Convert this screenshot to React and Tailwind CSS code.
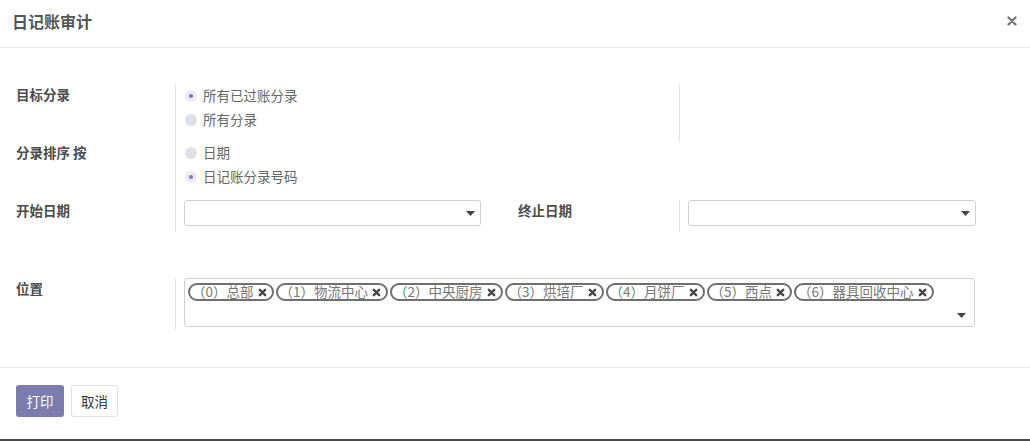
import React from "react";

const font = { fontFamily: '"Noto Sans CJK SC", "Liberation Sans", sans-serif' };

function Radio({ checked, label }) {
  return (
    <div className="flex items-center h-[24px]">
      <span
        className={
          "ml-[1px] w-[12px] h-[12px] rounded-full flex items-center justify-center " +
          (checked ? "bg-[#eceaf4]" : "bg-[#dfe1e6]")
        }
      >
        {checked && <span className="w-[4px] h-[4px] rounded-full bg-[#7c7bad]" />}
      </span>
      <span className="ml-[6px] text-[13.5px] text-[#666] -mt-[1px]">{label}</span>
    </div>
  );
}

function Caret() {
  return (
    <svg width="9" height="5" viewBox="0 0 9 5">
      <path d="M0 0 H9 L4.5 5 Z" fill="#444" />
    </svg>
  );
}

function Tag({ label }) {
  return (
    <span className="h-[18px] flex items-center border-2 border-[#6f6f6f] rounded-full pr-[5px] pl-[2px] text-[13.5px] text-[#777] leading-none">
      <span>{label}</span>
      <svg className="ml-[4px]" width="9" height="9" viewBox="0 0 10 10">
        <path d="M2 2 L8 8 M8 2 L2 8" stroke="#444" strokeWidth="2.6" strokeLinecap="round" />
      </svg>
    </span>
  );
}

export default function App() {
  const tags = [
    "（0）总部",
    "（1）物流中心",
    "（2）中央厨房",
    "（3）烘培厂",
    "（4）月饼厂",
    "（5）西点",
    "（6）器具回收中心",
  ];
  return (
    <div className="w-[1030px] h-[441px] bg-[#4a4a4a] overflow-hidden" style={font}>
      <div className="w-[1030px] h-[439px] bg-white flex flex-col">
        {/* Header */}
        <div className="h-[48px] border-b border-[#e9ecef] flex items-center justify-between pl-[12px] pr-[13px] shrink-0">
          <h4 className="text-[16px] font-bold text-[#555] -mt-[6px]">日记账审计</h4>
          <svg className="-mt-[6px]" width="10" height="10" viewBox="0 0 10 10">
            <path d="M1.5 1.5 L8.5 8.5 M8.5 1.5 L1.5 8.5" stroke="#777" strokeWidth="2.4" strokeLinecap="round" />
          </svg>
        </div>

        {/* Body */}
        <div className="flex-1 pl-[16px] pt-[36px]">
          {/* Row A */}
          <div className="flex h-[58px]">
            <div className="w-[159px] text-[13.5px] font-bold text-[#4c4c4c]">目标分录</div>
            <div className="w-[305px] border-l border-[#e4e4e4] pl-[8px]">
              <Radio checked label="所有已过账分录" />
              <Radio label="所有分录" />
            </div>
            <div className="w-[199px]" />
            <div className="w-[300px] border-l border-[#e4e4e4]" />
          </div>
          {/* Row B */}
          <div className="flex h-[48px]">
            <div className="w-[159px] text-[13.5px] font-bold text-[#4c4c4c]">分录排序 按</div>
            <div className="w-[305px] border-l border-[#e4e4e4] pl-[8px] -mt-[1px]">
              <Radio label="日期" />
              <Radio checked label="日记账分录号码" />
            </div>
          </div>
          {/* Row C */}
          <div className="flex h-[42px]">
            <div className="w-[159px] pt-[10px] text-[13.5px] font-bold text-[#4c4c4c]">开始日期</div>
            <div className="w-[305px] border-l border-[#e4e4e4] pl-[8px] pt-[10px]">
              <div className="w-[297px] h-[26px] border border-[#d0d0d0] rounded-[3px] flex items-center justify-end pr-[5px]">
                <Caret />
              </div>
            </div>
            <div className="w-[199px] pl-[38px] pt-[10px] text-[13.5px] font-bold text-[#4c4c4c]">终止日期</div>
            <div className="border-l border-[#e4e4e4] pl-[8px] h-[32px] mt-[10px]">
              <div className="w-[288px] h-[26px] border border-[#d0d0d0] rounded-[3px] flex items-center justify-end pr-[5px]">
                <Caret />
              </div>
            </div>
          </div>
          {/* Row D */}
          <div className="flex mt-[46px]">
            <div className="w-[159px] text-[13.5px] font-bold text-[#4c4c4c]">位置</div>
            <div className="border-l border-[#e4e4e4] pl-[8px] h-[52px]">
              <div className="w-[791px] h-[49px] border border-[#d0d0d0] rounded-[3px] relative pl-[3px] pt-[4px]">
                <div className="flex flex-wrap gap-[2px]">
                  {tags.map((t) => (
                    <Tag key={t} label={t} />
                  ))}
                </div>
                <span className="absolute right-[8px] bottom-[8px] flex">
                  <Caret />
                </span>
              </div>
            </div>
          </div>
        </div>

        {/* Footer */}
        <div className="h-[72px] border-t border-[#e9ecef] flex items-start pl-[16px] pt-[17px] gap-[7px] shrink-0">
          <button className="h-[32px] w-[48px] rounded-[3px] bg-[#7c7bad] text-white text-[13.5px]">打印</button>
          <button className="h-[32px] w-[47px] rounded-[3px] bg-white border border-[#dee2e6] text-[#333] text-[13.5px]">取消</button>
        </div>
      </div>
    </div>
  );
}
